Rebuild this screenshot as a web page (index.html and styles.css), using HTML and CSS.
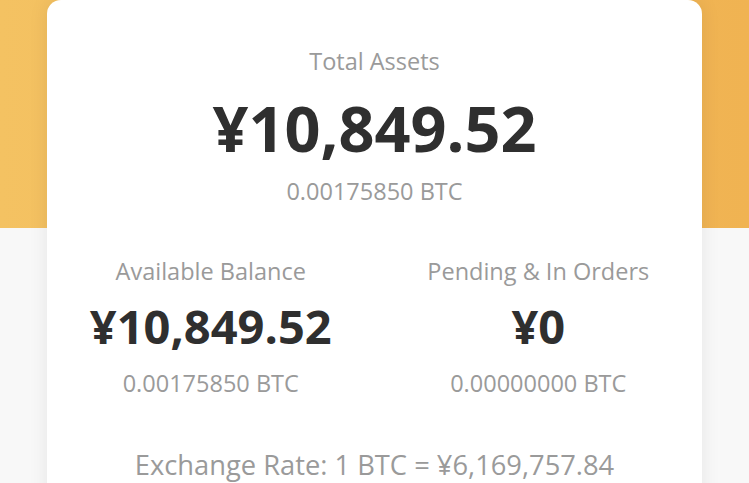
FILE: index.html
```html
<!DOCTYPE html>
<html lang="en">
<head>
  <meta charset="UTF-8" />
  <meta name="viewport" content="width=device-width, initial-scale=1.0"/>
  <title>Assets</title>
  <link rel="stylesheet" href="styles.css">
</head>
<body>
  <div class="page">
    <div class="card">
      <div class="total">
        <div class="label">Total Assets</div>
        <div class="amount big">¥10,849.52</div>
        <div class="btc">0.00175850 BTC</div>
      </div>
      <div class="split">
        <div class="col">
          <div class="label">Available Balance</div>
          <div class="amount">¥10,849.52</div>
          <div class="btc">0.00175850 BTC</div>
        </div>
        <div class="col">
          <div class="label">Pending &amp; In Orders</div>
          <div class="amount">¥0</div>
          <div class="btc">0.00000000 BTC</div>
        </div>
      </div>
      <div class="rate">Exchange Rate: 1 BTC = ¥6,169,757.84</div>
    </div>
  </div>
</body>
</html>
```

FILE: styles.css
```css
body {
  margin: 0;
  padding: 0;
  font-family: 'Open Sans', 'Noto Sans', sans-serif;
  background: #f8f8f8;
}
.page {
  background:
    linear-gradient(90deg, #f4c262, #f0b352) top / 100% 228px no-repeat,
    #f8f8f8;
  padding: 0 47px;
  height: 483px;
  overflow: hidden;
}
.card {
  background: #fff;
  border-radius: 14px;
  box-shadow: 0 0 20px rgba(0,0,0,0.08);
  padding-top: 44px;
  height: 600px;
  text-align: center;
}
.label, .btc, .rate {
  color: #9a9a9a;
  font-size: 23.5px;
  line-height: 34px;
}
.amount {
  color: #2f2f2f;
  font-weight: bold;
  font-size: 47px;
  line-height: 64px;
  margin: 6px 0 8px;
}
.amount.big {
  font-size: 63px;
  line-height: 84px;
  margin: 8px 0 4px;
}
.split {
  display: grid;
  grid-template-columns: 1fr 1fr;
  margin-top: 46px;
}
.rate {
  font-size: 27.3px;
  margin-top: 48px;
}
```
